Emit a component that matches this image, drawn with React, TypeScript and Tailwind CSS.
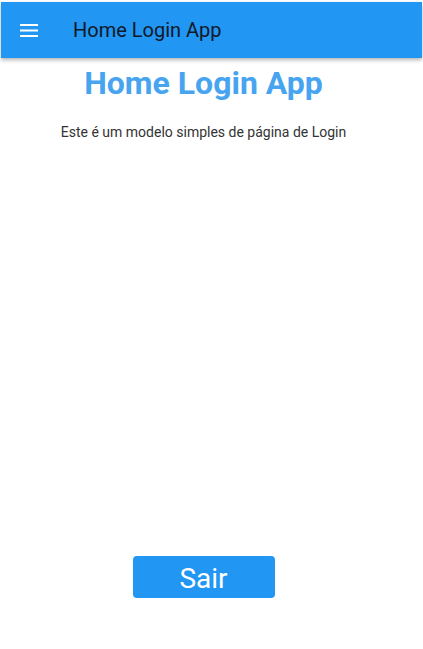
import React from "react";

export default function App() {
  return (
    <div className="w-[423px] h-[649px] bg-white overflow-hidden" style={{ fontFamily: "Roboto, 'Noto Sans', sans-serif" }}>
      <div className="pt-[2px] px-[1px]">
        <header className="h-[56px] bg-[#2196F3] flex items-center shadow-[0_2px_4px_rgba(0,0,0,0.3)] relative z-10">
          <div className="w-[72px] flex items-center pl-[19px]">
            <svg width="18" height="13" viewBox="0 0 18 13">
              <rect x="0" y="0" width="18" height="2" fill="white" />
              <rect x="0" y="5.5" width="18" height="2" fill="white" />
              <rect x="0" y="11" width="18" height="2" fill="white" />
            </svg>
          </div>
          <span className="text-[20px] text-[#111827] leading-none">Home Login App</span>
        </header>
      </div>
      <main className="w-[407px] flex flex-col items-center">
        <h1 className="mt-[5px] text-[32px] font-bold text-[#47A4F0] leading-[40px]">Home Login App</h1>
        <p className="mt-[19px] text-[14px] text-[#333333] leading-[20px]">Este é um modelo simples de página de Login</p>
        <button className="mt-[414px] w-[142px] h-[42px] pt-[3px] bg-[#2196F3] rounded-[4px] text-white text-[28px] leading-none flex items-center justify-center">
          Sair
        </button>
      </main>
    </div>
  );
}
